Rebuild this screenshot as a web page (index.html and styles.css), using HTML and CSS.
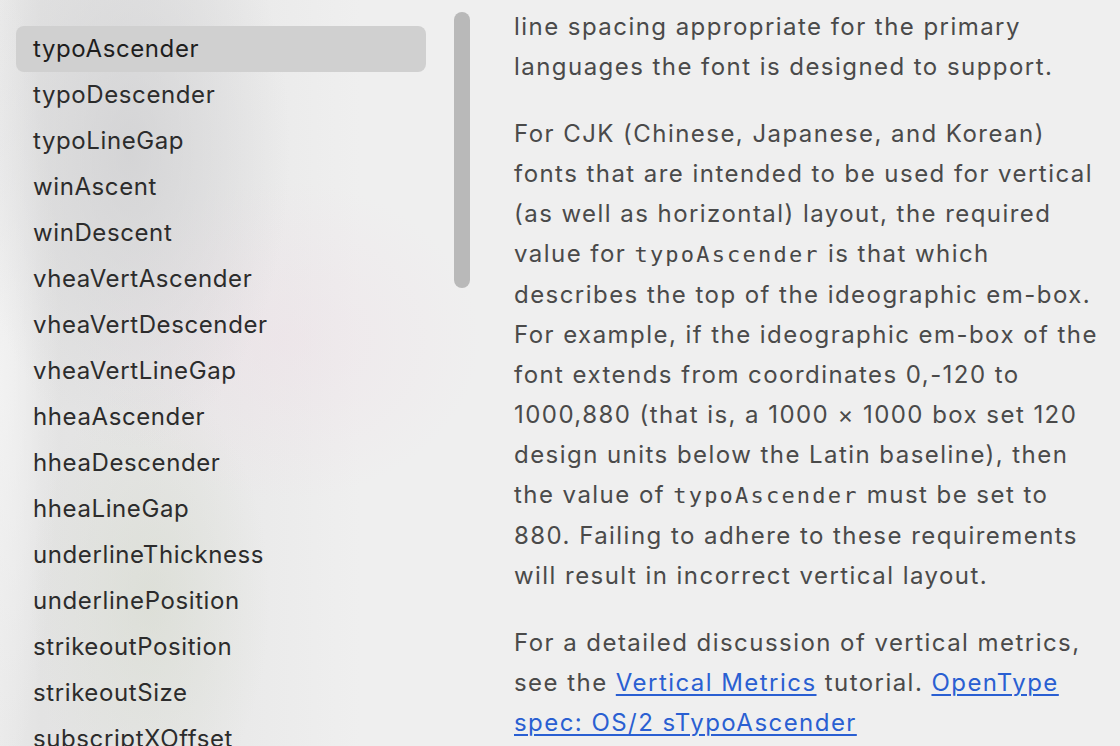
FILE: index.html
```html
<!DOCTYPE html>
<html lang="en">
<head>
<meta charset="utf-8">
<title>Font metrics</title>
<link rel="stylesheet" href="styles.css">
</head>
<body>
<div class="window">
  <aside class="sidebar">
    <ul class="list">
      <li class="item selected">typoAscender</li>
      <li class="item">typoDescender</li>
      <li class="item">typoLineGap</li>
      <li class="item">winAscent</li>
      <li class="item">winDescent</li>
      <li class="item">vheaVertAscender</li>
      <li class="item">vheaVertDescender</li>
      <li class="item">vheaVertLineGap</li>
      <li class="item">hheaAscender</li>
      <li class="item">hheaDescender</li>
      <li class="item">hheaLineGap</li>
      <li class="item">underlineThickness</li>
      <li class="item">underlinePosition</li>
      <li class="item">strikeoutPosition</li>
      <li class="item">strikeoutSize</li>
      <li class="item">subscriptXOffset</li>
    </ul>
    <div class="scroller"></div>
  </aside>
  <main class="content">
    <p>line spacing appropriate for the primary languages the font is designed to support.</p>
    <p>For CJK (Chinese, Japanese, and Korean) fonts that are intended to be used for vertical (as well as horizontal) layout, the required value for <code>typoAscender</code> is that which describes the top of the ideographic em-box. For example, if the ideographic em-box of the font extends from coordinates 0,-120 to 1000,880 (that is, a 1000 × 1000 box set 120 design units below the Latin baseline), then the value of <code>typoAscender</code> must be set to 880. Failing to adhere to these requirements will result in incorrect vertical layout.</p>
    <p>For a detailed discussion of vertical metrics, see the <a href="#">Vertical Metrics</a> tutorial. <a href="#">OpenType spec: OS/2 sTypoAscender</a></p>
  </main>
</div>
</body>
</html>
```
FILE: styles.css
```css
html, body {
  margin: 0;
  padding: 0;
  height: 100%;
  overflow: hidden;
}
body {
  background: #efefef;
  font-family: Inter, "Noto Sans", sans-serif;
}
.window {
  display: flex;
  height: 746px;
}
.sidebar {
  position: relative;
  width: 480px;
  flex: none;
  background:
    radial-gradient(ellipse 160px 300px at 130px 150px, rgba(205,205,207,0.7), rgba(205,205,207,0) 100%),
    radial-gradient(ellipse 200px 160px at 280px 340px, rgba(238,222,230,0.45), rgba(238,222,230,0) 100%),
    radial-gradient(ellipse 120px 220px at 150px 600px, rgba(214,218,206,0.6), rgba(214,218,206,0) 100%),
    radial-gradient(ellipse 60px 400px at 0px 380px, rgba(244,244,244,0.8), rgba(244,244,244,0) 100%),
    linear-gradient(90deg, #eaeaea 0px, #e3e3e3 40px, #e8e8e8 200px, #efefef 360px);
}
.list {
  list-style: none;
  margin: 0;
  padding: 26px 0 0 16px;
}
.item {
  width: 410px;
  height: 46px;
  box-sizing: border-box;
  padding-left: 17px;
  line-height: 46px;
  font-size: 24px;
  color: #2c2c2c;
  letter-spacing: 0.6px;
  border-radius: 8px;
  white-space: nowrap;
}
.item.selected {
  background: #d0d0d0;
  color: #1e1e1e;
}
.scroller {
  position: absolute;
  left: 454px;
  top: 12px;
  width: 16px;
  height: 276px;
  border-radius: 8px;
  background: #b9b9b9;
}
.content {
  padding: 7px 0 0 34px;
  width: 591px;
  font-size: 24px;
  line-height: 40px;
  letter-spacing: 1.45px;
  color: #4a4a4a;
}
.content p {
  margin: 0 0 27px 0;
}
code {
  font-family: "DejaVu Sans Mono", "Liberation Mono", monospace;
  font-size: 22px;
  letter-spacing: 2.2px;
  color: #474747;
}
a {
  color: #2a5fd2;
  text-decoration: underline;
  text-underline-offset: 3px;
  text-decoration-thickness: 1.5px;
}
```
